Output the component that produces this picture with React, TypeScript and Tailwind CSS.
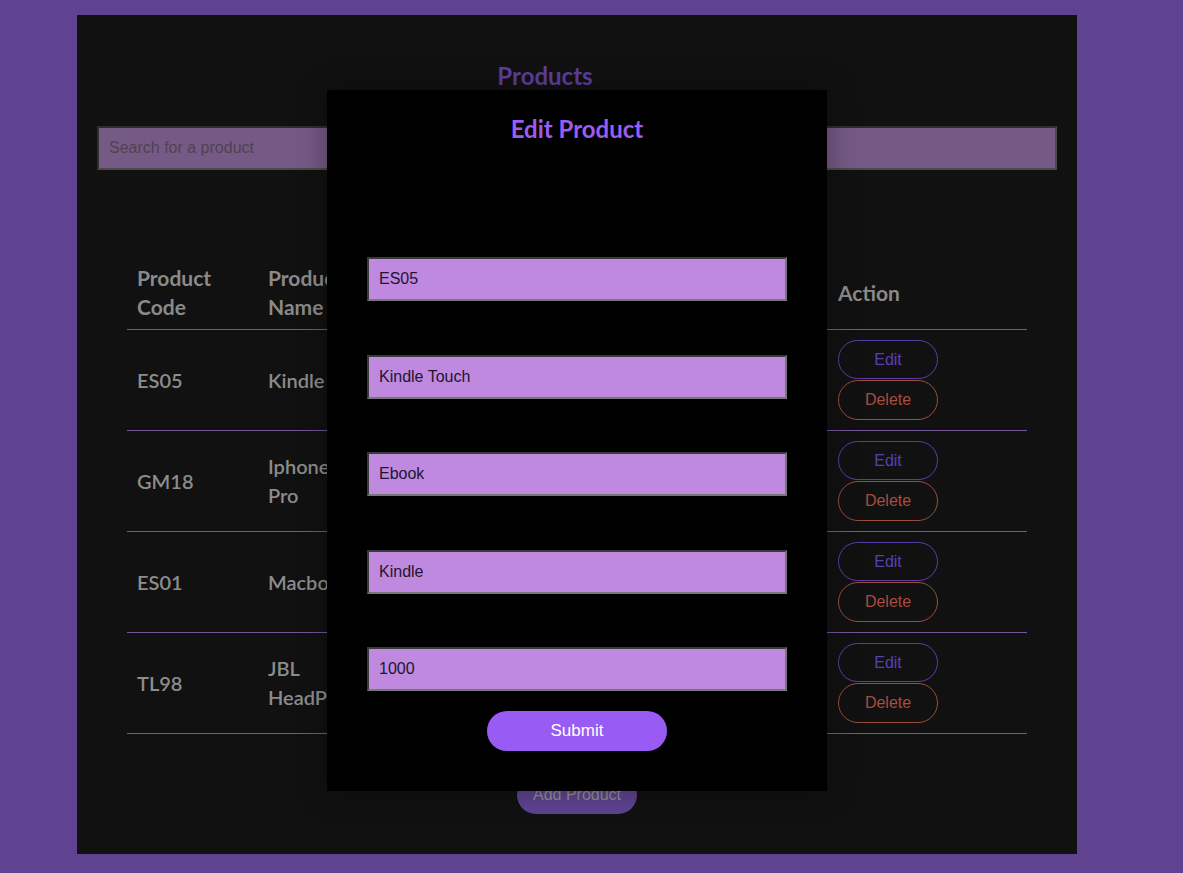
import { Fragment } from 'react';

const products = [
  { code: 'ES05', name: 'Kindle Touch', category: 'Ebook', brand: 'Kindle', price: 1000 },
  { code: 'GM18', name: 'Iphone 13 Pro', category: 'Mobile', brand: 'Apple', price: 1200 },
  { code: 'ES01', name: 'Macbook', category: 'Laptop', brand: 'Apple', price: 2500 },
  { code: 'TL98', name: 'JBL HeadPhone', category: 'Audio', brand: 'JBL', price: 300 },
];

const columns = [
  { label: 'Product Code', width: 'w-[131px]' },
  { label: 'Product Name', width: 'w-[140px]' },
  { label: 'Category', width: 'w-[143px]' },
  { label: 'Brand', width: 'w-[144px]' },
  { label: 'Price', width: 'w-[143px]' },
  { label: 'Action', width: 'w-[199px]' },
];

const editFields = ['ES05', 'Kindle Touch', 'Ebook', 'Kindle', '1000'];

const headingFont = "font-['Lato','Noto_Sans',sans-serif]";
const bodyFont = "font-['Liberation_Sans',Arial,sans-serif]";

const App = () => {
  return (
    <div className="min-h-screen bg-[#5f4290] pt-[15px] pb-[19px]">
      <div className="relative ml-[77px] h-[839px] w-[1000px] bg-[#111111] px-[20px] pt-[45px]">
        <h1
          className={`${headingFont} mr-[64px] text-center text-[24px] leading-[32px] font-bold text-[#5d3f9e]`}>
          Products
        </h1>
        <input
          readOnly
          placeholder="Search for a product"
          className={`${bodyFont} mt-[34px] block h-[44px] w-full border-2 border-t-[#2e2e2e] border-r-[#4a4a4a] border-b-[#4a4a4a] border-l-[#2e2e2e] bg-[#765a86] px-[10px] text-[16px] text-[#4a3a4a] outline-none placeholder:text-[#4f434f]`}
        />

        <table className={`${headingFont} mx-auto mt-[85px] w-[900px] table-fixed border-collapse text-left`}>
          <thead>
            <tr className="border-b border-[#74579a]">
              {columns.map(({ label, width }) => (
                <th
                  key={label}
                  className={`${width} px-[10px] py-[8px] align-middle text-[21px] leading-[29px] font-bold text-[#8a8a8a]`}>
                  {label}
                </th>
              ))}
            </tr>
          </thead>
          <tbody>
            {products.map((p) => (
              <tr key={p.code} className="border-b border-[#74579a]">
                <td className="px-[10px] text-[20px] leading-[29px] font-semibold text-[#8c8c8c]">{p.code}</td>
                <td className="px-[10px] text-[20px] leading-[29px] font-semibold text-[#8c8c8c]">{p.name}</td>
                <td className="px-[10px] text-[20px] leading-[29px] font-semibold text-[#8c8c8c]">{p.category}</td>
                <td className="px-[10px] text-[20px] leading-[29px] font-semibold text-[#8c8c8c]">{p.brand}</td>
                <td className="px-[10px] text-[20px] leading-[29px] font-semibold text-[#8c8c8c]">{p.price}</td>
                <td className="px-[10px] py-[10px]">
                  <div className={`${bodyFont} flex flex-col gap-[1px]`}>
                    <button className="h-[39px] w-[100px] rounded-full border border-[#5a3ea8] text-[16px] text-[#5a3fb4]">
                      Edit
                    </button>
                    <button className="h-[40px] w-[100px] rounded-full border border-[#9a4e3c] text-[16px] text-[#a84c3e]">
                      Delete
                    </button>
                  </div>
                </td>
              </tr>
            ))}
          </tbody>
        </table>

        <div className="mt-[42px] flex justify-center">
          <button
            className={`${bodyFont} h-[38px] w-[120px] rounded-full bg-[#5f4391] text-[16px] text-[#8f8f8f]`}>
            Add Product
          </button>
        </div>

        {/* modal sits over the table */}
        <div className="absolute top-[75px] left-[250px] flex h-[701px] w-[500px] flex-col items-center bg-black pt-[23px] shadow-[0_0_30px_rgba(0,0,0,0.35)]">
          <h2 className={`${headingFont} text-[24px] leading-[32px] font-bold text-[#9b5cf2]`}>
            Edit Product
          </h2>
          <form className="mt-[112px] flex flex-col items-center">
            {editFields.map((value, index) => (
              <Fragment key={`edit-${index}`}>
                <input
                  readOnly
                  value={value}
                  className={`${bodyFont} ${index === 0 ? '' : 'mt-[53.5px]'} block h-[44px] w-[420px] border-2 border-t-[#3a3a3a] border-r-[#777777] border-b-[#777777] border-l-[#3a3a3a] bg-[#be89df] px-[10px] text-[16px] text-[#231530] outline-none`}
                />
              </Fragment>
            ))}
            <button
              type="button"
              className={`${bodyFont} mt-[20px] h-[40px] w-[180px] rounded-full bg-[#985cf4] text-[17px] text-white`}>
              Submit
            </button>
          </form>
        </div>
      </div>
    </div>
  );
};

export default App;
